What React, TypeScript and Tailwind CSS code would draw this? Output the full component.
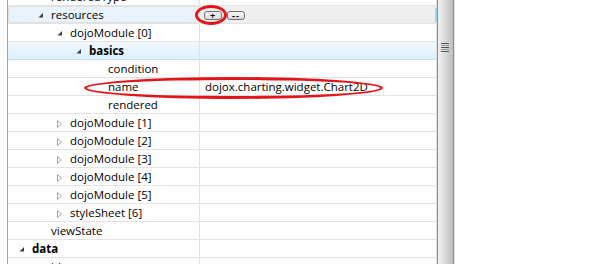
import React from 'react';

type Node = {
  label: string;
  depth: number;
  state?: 'open' | 'closed';
  bold?: boolean;
  value?: string;
  kind?: 'selected' | 'group';
};

const rows: Node[] = [
  { label: 'renderedType', depth: 1 },
  { label: 'resources', depth: 1, state: 'open', kind: 'selected' },
  { label: 'dojoModule [0]', depth: 2, state: 'open' },
  { label: 'basics', depth: 3, state: 'open', bold: true, kind: 'group' },
  { label: 'condition', depth: 4 },
  { label: 'name', depth: 4, value: 'dojox.charting.widget.Chart2D' },
  { label: 'rendered', depth: 4 },
  { label: 'dojoModule [1]', depth: 2, state: 'closed' },
  { label: 'dojoModule [2]', depth: 2, state: 'closed' },
  { label: 'dojoModule [3]', depth: 2, state: 'closed' },
  { label: 'dojoModule [4]', depth: 2, state: 'closed' },
  { label: 'dojoModule [5]', depth: 2, state: 'closed' },
  { label: 'styleSheet [6]', depth: 2, state: 'closed' },
  { label: 'viewState', depth: 1 },
  { label: 'data', depth: 0, state: 'open', bold: true },
  { label: 'id', depth: 1 },
];

function Twisty({ state }: { state?: 'open' | 'closed' }) {
  if (state === 'open') {
    return (
      <svg width="13" height="17" viewBox="0 0 13 17" className="shrink-0">
        <polygon points="0.5,11.5 5,7 5,11.5" fill="#3c3c3c" />
      </svg>
    );
  }
  if (state === 'closed') {
    return (
      <svg width="13" height="17" viewBox="0 0 13 17" className="shrink-0">
        <polygon points="0.5,6.5 0.5,13.5 4.5,10" fill="none" stroke="#a6a6a6" strokeWidth="1" />
      </svg>
    );
  }
  return <span className="w-[13px] shrink-0" />;
}

function MiniButton({ children }: { children: React.ReactNode }) {
  return (
    <span className="flex h-[9px] w-[18px] items-center justify-center rounded-[3px] border border-[#6f6f6f] bg-gradient-to-b from-[#f6f6f6] to-[#dcdcdc] text-[9px] font-bold leading-none tracking-[1px] text-black">
      {children}
    </span>
  );
}

function Row({ node }: { node: Node }) {
  const selected = node.kind === 'selected';
  const group = node.kind === 'group';
  return (
    <div
      className={
        'flex h-[18px] border-b ' +
        (group
          ? 'border-[#c9e3f6] bg-gradient-to-b from-[#f1f9fe] to-[#dcf0fc]'
          : 'border-[#e3e3e3]')
      }
    >
      <div
        className={
          'flex w-[192px] shrink-0 items-center border-r border-[#e0e0e0] ' +
          (selected ? 'rounded-[2px] border border-[#c3dcf3] bg-[#e8f3fc]' : '')
        }
        style={{ paddingLeft: 11 + node.depth * 19 - (selected ? 1 : 0) }}
      >
        <Twisty state={node.state} />
        <span className={'whitespace-nowrap text-black ' + (node.bold ? 'font-bold' : '')}>
          {node.label}
        </span>
      </div>
      <div
        className={
          'relative flex flex-1 items-center gap-[5px] border-r border-[#e0e0e0] pl-[5px] ' +
          (selected ? 'bg-[#efefef]' : '')
        }
      >
        {selected && (
          <>
            <span className="ml-[-1px] flex gap-[5px] pt-[1px]">
              <MiniButton>+</MiniButton>
              <MiniButton>--</MiniButton>
            </span>
            <span className="absolute right-[-1px] top-[2px] h-[14px] w-[2px] bg-[#9fd4f7]" />
          </>
        )}
        {node.value && <span className="whitespace-nowrap text-black">{node.value}</span>}
      </div>
    </div>
  );
}

export default function App() {
  return (
    <div
      className="relative flex h-[264px] w-[611px] overflow-hidden bg-white text-[11.5px] leading-[17px]"
      style={{ fontFamily: '"Open Sans", "Liberation Sans", Arial, sans-serif' }}
    >
      <div className="w-[7px] shrink-0" />
      <div className="w-px shrink-0 bg-[#a4a4a4]" />

      {/* property tree */}
      <div className="mt-[-12px] w-[429px] shrink-0">
        {rows.map((r) => (
          <Row key={r.label} node={r} />
        ))}
      </div>

      {/* sash */}
      <div className="relative w-[17px] shrink-0 border-x border-[#8c8c8c] bg-gradient-to-r from-[#f2f2f2] via-[#dadada] to-[#bdbdbd]">
        <div className="absolute left-[3px] top-[43px] flex w-[8px] flex-col gap-[1px]">
          <span className="h-px bg-[#555]" />
          <span className="h-px bg-[#999]" />
          <span className="h-px bg-[#555]" />
          <span className="h-px bg-[#999]" />
          <span className="h-px bg-[#555]" />
        </div>
      </div>
      <div className="flex-1 border-l border-[#e8e8e8]" />

      {/* annotations */}
      <div className="pointer-events-none absolute left-[195px] top-[5px] h-[20px] w-[32px] rounded-[50%] border-[3px] border-[#e3141b]" />
      <div className="pointer-events-none absolute left-[84px] top-[77px] h-[22px] w-[299px] rounded-[50%] border-[3px] border-[#e3141b]" />
    </div>
  );
}
